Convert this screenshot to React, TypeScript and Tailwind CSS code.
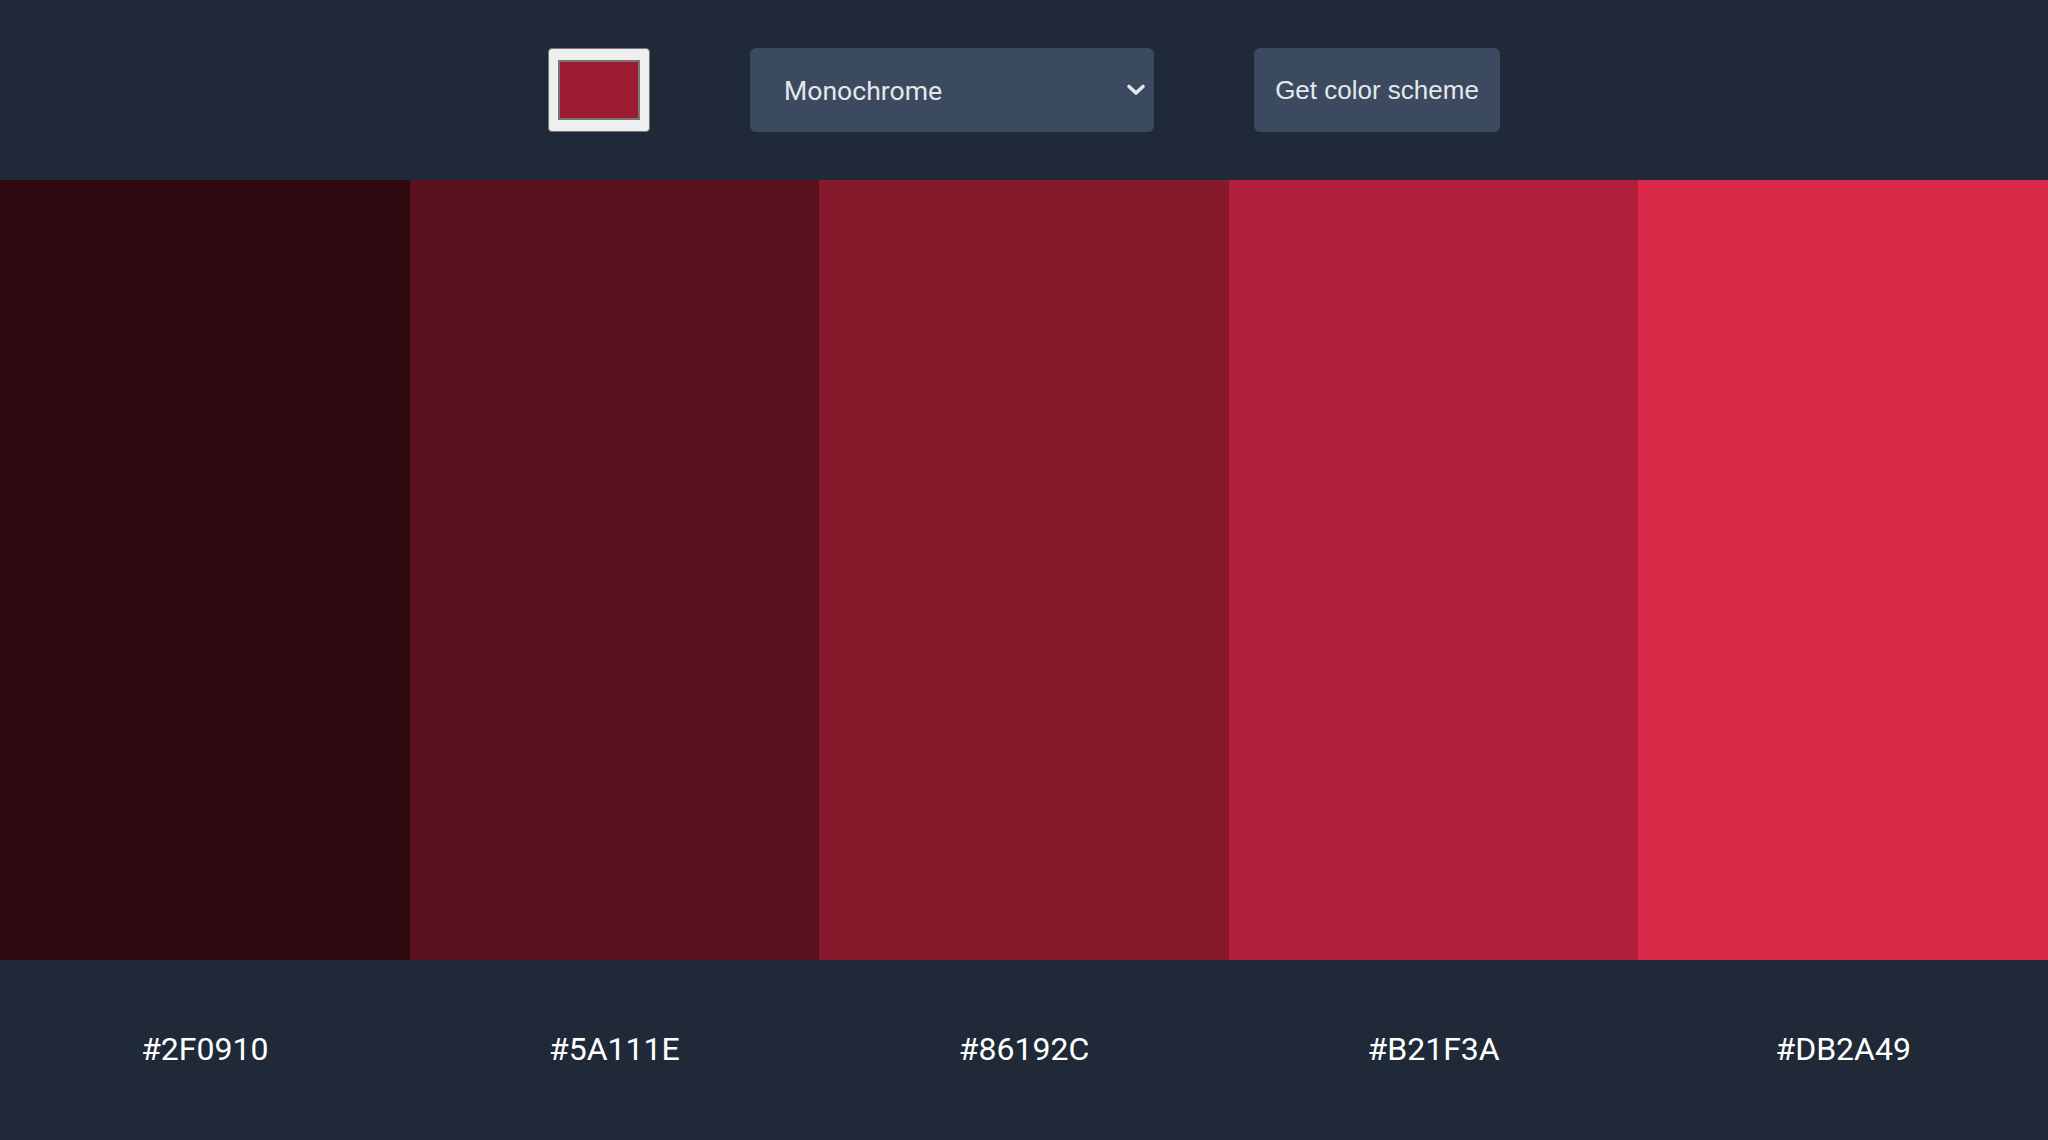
const colors = ["#2F0910", "#5A111E", "#86192C", "#B21F3A", "#DB2A49"];

const swatchBg: Record<string, string> = {
  "#2F0910": "bg-[#2F0910]",
  "#5A111E": "bg-[#5A111E]",
  "#86192C": "bg-[#86192C]",
  "#B21F3A": "bg-[#B21F3A]",
  "#DB2A49": "bg-[#DB2A49]",
};

const App = () => {
  return (
    <div className="w-full h-[1140px] flex flex-col bg-[#1f2937] font-['Roboto',sans-serif]">
      <header className="h-[180px] flex items-center justify-center gap-[100px] shrink-0">
        <div className="w-[102px] h-[84px] bg-[#efefef] border border-[#767676] rounded-[4px] flex items-center justify-center">
          <div className="w-[82px] h-[60px] bg-[#9b1b30] border-2 border-[#767676]" />
        </div>
        <div className="w-[404px] h-[84px] bg-[#3c4a60] rounded-[6px] flex items-center justify-between pl-[34px] pr-[7px] text-[26.6px] text-[#e5e7eb]">
          <span className="pt-[2px]">Monochrome</span>
          <svg width="22" height="14" viewBox="0 0 22 14" fill="none">
            <path d="M4 3.5 L11 10 L18 3.5" stroke="#e5e7eb" strokeWidth="3.6" strokeLinecap="round" strokeLinejoin="round" />
          </svg>
        </div>
        <button className="w-[246px] h-[84px] bg-[#3c4a60] rounded-[6px] text-[26px] text-[#e5e7eb] font-['Liberation_Sans',Arial,sans-serif]">
          Get color scheme
        </button>
      </header>
      <div className="flex-1 grid grid-cols-5">
        {colors.map((c) => (
          <div key={c} className="flex flex-col">
            <div className={`h-[780px] ${swatchBg[c]}`} />
            <div className="flex-1 flex items-center justify-center pb-[2px] text-[32px] text-white">
              {c}
            </div>
          </div>
        ))}
      </div>
    </div>
  );
};

export default App;
